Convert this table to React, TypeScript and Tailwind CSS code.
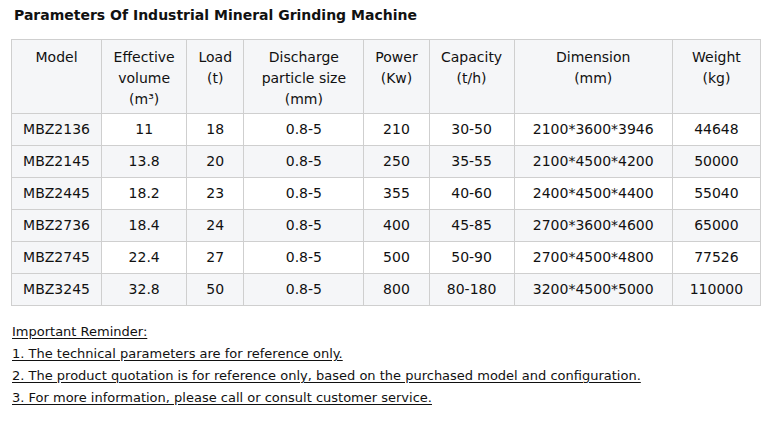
const headers = [
  { label: ["Model"], width: "w-[90px]" },
  { label: ["Effective", "volume", "(m³)"], width: "w-[85px]" },
  { label: ["Load", "(t)"], width: "w-[57px]" },
  { label: ["Discharge", "particle size", "(mm)"], width: "w-[120px]" },
  { label: ["Power", "(Kw)"], width: "w-[65px]" },
  { label: ["Capacity", "(t/h)"], width: "w-[85px]" },
  { label: ["Dimension", "(mm)"], width: "w-[158px]" },
  { label: ["Weight", "(kg)"], width: "w-[88px]" },
];

const rows = [
  ["MBZ2136", "11", "18", "0.8-5", "210", "30-50", "2100*3600*3946", "44648"],
  ["MBZ2145", "13.8", "20", "0.8-5", "250", "35-55", "2100*4500*4200", "50000"],
  ["MBZ2445", "18.2", "23", "0.8-5", "355", "40-60", "2400*4500*4400", "55040"],
  ["MBZ2736", "18.4", "24", "0.8-5", "400", "45-85", "2700*3600*4600", "65000"],
  ["MBZ2745", "22.4", "27", "0.8-5", "500", "50-90", "2700*4500*4800", "77526"],
  ["MBZ3245", "32.8", "50", "0.8-5", "800", "80-180", "3200*4500*5000", "110000"],
];

const reminders = [
  "Important Reminder:",
  "1. The technical parameters are for reference only.",
  "2. The product quotation is for reference only, based on the purchased model and configuration.",
  "3. For more information, please call or consult customer service.",
];

export default function App() {
  return (
    <div className="w-[779px] h-[423px] bg-white text-[#111] font-['DejaVu_Sans',sans-serif] overflow-hidden">
      <h2 className="pl-[14px] pt-[6px] text-[14px] leading-[18px] font-bold">
        Parameters Of Industrial Mineral Grinding Machine
      </h2>
      <div className="pl-[11px] pt-[15px]">
        <table className="border-collapse table-fixed w-[750px] text-[14px] leading-[21px]">
          <thead>
            <tr className="bg-[#f5f6f8]">
              {headers.map((h) => (
                <th
                  key={h.label[0]}
                  className={`${h.width} border border-[#cfcfcf] px-1 pt-[7px] pb-[3px] h-[74px] align-top font-normal text-center`}
                >
                  {h.label.map((line) => (
                    <div key={line}>{line}</div>
                  ))}
                </th>
              ))}
            </tr>
          </thead>
          <tbody>
            {rows.map((row, i) => (
              <tr key={row[0]} className={i % 2 === 1 ? "bg-[#f5f6f8]" : "bg-white"}>
                {row.map((cell, j) => (
                  <td
                    key={j}
                    className={`border border-[#cfcfcf] h-[32px] px-1 text-center align-middle ${
                      j === 0 ? "bg-[#f5f6f8]" : ""
                    }`}
                  >
                    {cell}
                  </td>
                ))}
              </tr>
            ))}
          </tbody>
        </table>
      </div>
      <div className="pl-[12px] pt-[15px] text-[13px] leading-[22px]">
        {reminders.map((line) => (
          <p key={line}>
            <span className="underline underline-offset-2">{line}</span>
          </p>
        ))}
      </div>
    </div>
  );
}
